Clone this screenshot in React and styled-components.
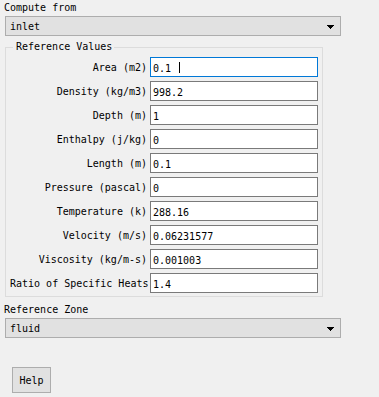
import React from "react";
import styled, { createGlobalStyle } from "styled-components";

const GlobalStyle = createGlobalStyle`
  html, body {
    margin: 0;
    padding: 0;
    background: #f0f0f0;
  }
  body {
    font-family: "DejaVu Sans Mono", "Liberation Mono", "Noto Sans CJK SC", monospace;
    font-size: 10px;
    color: #000;
  }
`;

const Panel = styled.div`
  width: 379px;
  height: 397px;
  background: #f0f0f0;
  padding-left: 5px;
  box-sizing: border-box;
`;

const Caption = styled.div`
  height: 16px;
  line-height: 16px;
  margin-top: ${(p) => p.$top || 0}px;
  margin-left: -1px;
  white-space: nowrap;
`;

const Combo = styled.div`
  width: 336px;
  height: 20px;
  box-sizing: border-box;
  border: 1px solid #adadad;
  background: #e1e1e1;
  display: flex;
  align-items: flex-start;
  justify-content: space-between;
  padding: 1px 6px 0 4px;
  line-height: 17px;
`;

const Arrow = styled.svg`
  display: block;
  margin-top: 7px;
  shape-rendering: crispEdges;
`;

const Group = styled.fieldset`
  margin: 5px 0 0 0;
  width: 318px;
  box-sizing: border-box;
  border: 1px solid #dcdcdc;
  padding: 4px 4px 3px 4px;
  min-width: 0;
`;

const Legend = styled.legend`
  margin-left: 3px;
  padding: 0 2px 0 3px;
  line-height: 12px;
`;

const Grid = styled.div`
  display: grid;
  grid-template-columns: 137px 168px;
  column-gap: 3px;
  row-gap: 4px;
`;

const FieldLabel = styled.label`
  text-align: right;
  white-space: nowrap;
  height: 20px;
  line-height: 18px;
  padding-top: 2px;
  box-sizing: border-box;
`;

const FieldWrap = styled.span`
  position: relative;
  display: block;
  height: 20px;
`;

const Field = styled.input`
  display: block;
  width: 168px;
  height: 20px;
  box-sizing: border-box;
  margin: 0;
  border: 1px solid ${(p) => (p.$active ? "#0078d7" : "#7a7a7a")};
  background: #fff;
  padding: 3px 2px 0 2px;
  font: inherit;
  color: #000;
  outline: none;
`;

const Caret = styled.span`
  position: absolute;
  left: 29px;
  top: 5px;
  width: 1px;
  height: 11px;
  background: #000;
`;

const HelpButton = styled.button`
  display: block;
  margin: 29px 0 0 7px;
  width: 39px;
  height: 26px;
  box-sizing: border-box;
  border: 1px solid #adadad;
  background: #e1e1e1;
  font: inherit;
  color: #000;
  padding: 1px 0 0 0;
`;

const fields = [
  ["Area (m2)", "0.1 ", true],
  ["Density (kg/m3)", "998.2"],
  ["Depth (m)", "1"],
  ["Enthalpy (j/kg)", "0"],
  ["Length (m)", "0.1"],
  ["Pressure (pascal)", "0"],
  ["Temperature (k)", "288.16"],
  ["Velocity (m/s)", "0.06231577"],
  ["Viscosity (kg/m-s)", "0.001003"],
  ["Ratio of Specific Heats", "1.4"],
];

const DropArrow = () => (
  <Arrow width="7" height="4" viewBox="0 0 7 4">
    <path d="M0 0h7v1h-1v1h-1v1h-1v1h-1v-1h-1v-1h-1v-1h-1z" fill="#000" />
  </Arrow>
);

const App = () => (
  <>
    <GlobalStyle />
    <Panel>
      <Caption>Compute from</Caption>
      <Combo>
        <span>inlet</span>
        <DropArrow />
      </Combo>
      <Group>
        <Legend>Reference Values</Legend>
        <Grid>
          {fields.map(([label, value, active]) => (
            <React.Fragment key={label}>
              <FieldLabel>{label}</FieldLabel>
              <FieldWrap>
                <Field defaultValue={value} $active={active} readOnly />
                {active && <Caret />}
              </FieldWrap>
            </React.Fragment>
          ))}
        </Grid>
      </Group>
      <Caption $top={5}>Reference Zone</Caption>
      <Combo>
        <span>fluid</span>
        <DropArrow />
      </Combo>
      <HelpButton>Help</HelpButton>
    </Panel>
  </>
);

export default App;
